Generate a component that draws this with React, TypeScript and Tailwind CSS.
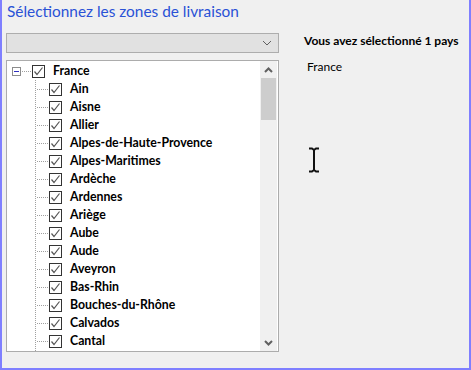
import React from 'react';

const ITEMS = [
    'Ain', 'Aisne', 'Allier', 'Alpes-de-Haute-Provence', 'Alpes-Maritimes', 'Ardèche', 'Ardennes',
    'Ariège', 'Aube', 'Aude', 'Aveyron', 'Bas-Rhin', 'Bouches-du-Rhône', 'Calvados', 'Cantal',
];

const Check: React.FC = () => (
    <div className="w-[13px] h-[13px] border border-[#333333] bg-white flex items-center justify-center shrink-0">
        <svg width="11" height="11" viewBox="0 0 11 11">
            <polyline points="1.5,5.5 4,8.5 9.5,1.5" fill="none" stroke="#555555" strokeWidth="1.2" />
        </svg>
    </div>
);

const App: React.FC = () => {
    return (
        <div
            className="relative w-[471px] h-[370px] bg-[#f0f0f0] border-l-2 border-r-2 border-b-2 border-[#7f7fff] text-[12px] text-black"
            style={{ fontFamily: 'Lato, "Noto Sans", sans-serif' }}
        >
            <h1 className="pl-[5px] pt-[1px] h-[26px] text-[15.4px] leading-[20px] text-[#2a52d6]">
                Sélectionnez les zones de livraison
            </h1>
            <div className="flex">
                <div className="w-[273px] ml-[4px] flex flex-col">
                    <div className="mt-[7px] h-[20px] bg-[#e1e1e1] border border-[#adadad] flex items-center justify-end pr-[6px]">
                        <svg width="10" height="6" viewBox="0 0 10 6">
                            <polyline points="1,1 5,5 9,1" fill="none" stroke="#606060" strokeWidth="1" />
                        </svg>
                    </div>
                    <div className="mt-[7px] h-[292px] bg-white border border-[#acacac] flex">
                        <div className="flex-1 relative overflow-hidden pt-px">
                            {/* tree lines */}
                            <div className="absolute left-[28px] top-[19px] bottom-0 border-l border-dotted border-[#a0a0a0]" />
                            <div className="h-[18px] flex items-center">
                                <div className="ml-[5px] w-[9px] h-[9px] border border-[#8c8c8c] bg-white flex items-center justify-center">
                                    <div className="w-[5px] h-px bg-[#3030c0]" />
                                </div>
                                <div className="w-[9px] border-t border-dotted border-[#a0a0a0] mx-[1px]" />
                                <Check />
                                <span className="ml-[8px] font-bold text-[12.3px] leading-[18px]">France</span>
                            </div>
                            {ITEMS.map(name => (
                                <div key={name} className="h-[18px] flex items-center">
                                    <div className="ml-[30px] w-[11px] border-t border-dotted border-[#a0a0a0] mr-[1px]" />
                                    <Check />
                                    <span className="ml-[8px] font-bold text-[12.3px] leading-[18px] whitespace-nowrap">{name}</span>
                                </div>
                            ))}
                        </div>
                        <div className="w-[17px] bg-[#f0f0f0] flex flex-col items-center mr-px">
                            <div className="h-[17px] flex items-center justify-center">
                                <svg width="9" height="6" viewBox="0 0 9 6">
                                    <polyline points="1,5 4.5,1.5 8,5" fill="none" stroke="#606060" strokeWidth="2" />
                                </svg>
                            </div>
                            <div className="w-[15px] h-[42px] bg-[#cdcdcd]" />
                            <div className="flex-1" />
                            <div className="h-[17px] flex items-center justify-center">
                                <svg width="9" height="6" viewBox="0 0 9 6">
                                    <polyline points="1,1 4.5,4.5 8,1" fill="none" stroke="#606060" strokeWidth="2" />
                                </svg>
                            </div>
                        </div>
                    </div>
                </div>
                <div className="ml-[25px] flex flex-col whitespace-nowrap">
                    <p className="mt-[6px] font-bold leading-[18px]">Vous avez sélectionné 1 pays</p>
                    <p className="mt-[8px] ml-[3px] leading-[18px]">France</p>
                </div>
            </div>
            <svg className="absolute left-[306px] top-[147px]" width="12" height="26" viewBox="0 0 12 26">
                <path d="M1 1.5h3l2 1.5 2-1.5h3M6 3v20M1 24.5h3l2-1.5 2 1.5h3" fill="none" stroke="#111" strokeWidth="2" />
            </svg>
        </div>
    );
};

export default App;
